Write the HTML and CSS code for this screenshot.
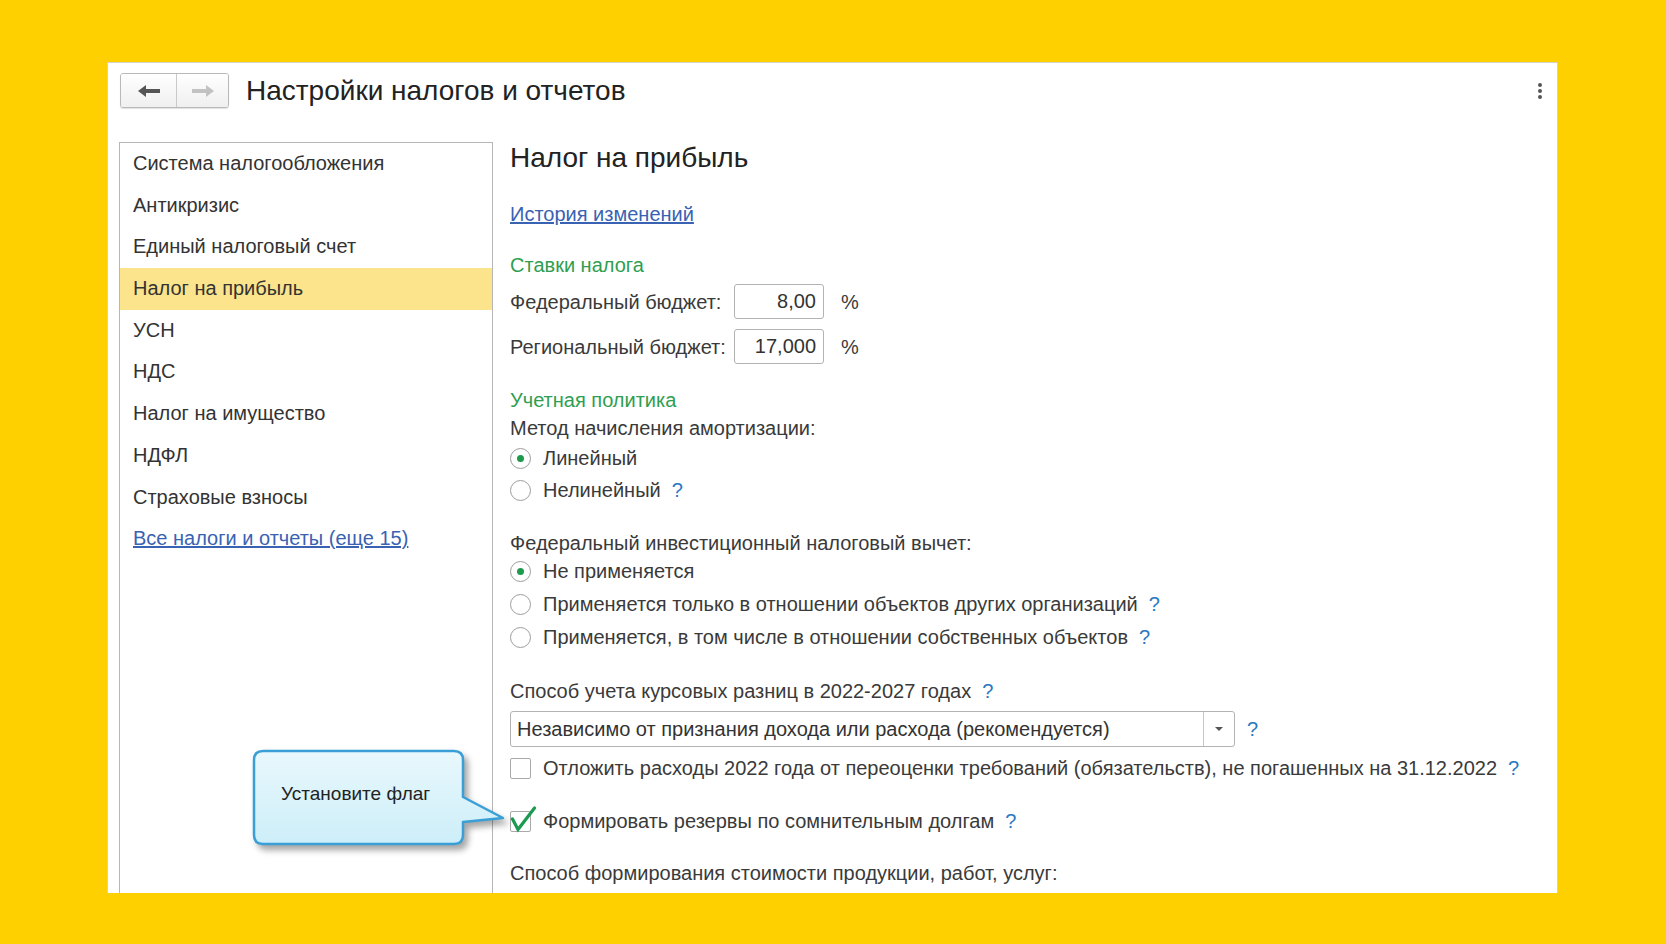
FILE: index.html
```html
<!DOCTYPE html>
<html lang="ru">
<head>
  <meta charset="UTF-8">
  <meta name="viewport" content="width=device-width, initial-scale=1.0">
  <title>Настройки налогов и отчетов</title>
  <link rel="stylesheet" href="styles.css">
</head>
<body>
  <div class="screen">
    <div class="window">
      <div class="header">
        <div class="nav">
          <button class="nav-btn back" title="Назад">
            <svg width="22" height="12" viewBox="0 0 22 12"><path d="M0 6 L8 0 L8 4 L22 4 L22 8 L8 8 L8 12 Z"/></svg>
          </button>
          <button class="nav-btn fwd" title="Вперед">
            <svg width="22" height="12" viewBox="0 0 22 12"><path d="M22 6 L14 0 L14 4 L0 4 L0 8 L14 8 L14 12 Z"/></svg>
          </button>
        </div>
        <h1 class="title">Настройки налогов и отчетов</h1>
        <div class="kebab"><span></span><span></span><span></span></div>
      </div>

      <div class="main">
        <ul class="sidebar">
          <li>Система налогообложения</li>
          <li>Антикризис</li>
          <li>Единый налоговый счет</li>
          <li class="active">Налог на прибыль</li>
          <li>УСН</li>
          <li>НДС</li>
          <li>Налог на имущество</li>
          <li>НДФЛ</li>
          <li>Страховые взносы</li>
          <li><a href="#">Все налоги и отчеты (еще 15)</a></li>
        </ul>

        <div class="content">
          <h2 class="heading">Налог на прибыль</h2>
          <a class="history" href="#">История изменений</a>

          <div class="group-title rates">Ставки налога</div>
          <div class="rate-row first">
            <span class="rate-label">Федеральный бюджет:</span>
            <span class="num-field">8,00</span>
            <span class="pct">%</span>
          </div>
          <div class="rate-row">
            <span class="rate-label">Региональный бюджет:</span>
            <span class="num-field">17,000</span>
            <span class="pct">%</span>
          </div>

          <div class="group-title policy">Учетная политика</div>
          <div class="label">Метод начисления амортизации:</div>
          <div class="radio-row"><span class="radio on"></span>Линейный</div>
          <div class="radio-row"><span class="radio"></span>Нелинейный<span class="help">?</span></div>

          <div class="label invest">Федеральный инвестиционный налоговый вычет:</div>
          <div class="radio-row tall"><span class="radio on"></span>Не применяется</div>
          <div class="radio-row tall"><span class="radio"></span>Применяется только в отношении объектов других организаций<span class="help">?</span></div>
          <div class="radio-row tall"><span class="radio"></span>Применяется, в том числе в отношении собственных объектов<span class="help">?</span></div>

          <div class="label rates-diff">Способ учета курсовых разниц в 2022-2027 годах<span class="help">?</span></div>
          <div class="combo-row">
            <div class="combo">
              <span class="combo-text">Независимо от признания дохода или расхода (рекомендуется)</span>
              <span class="combo-btn"><span class="caret"></span></span>
            </div>
            <span class="help">?</span>
          </div>
          <div class="check-row postpone"><span class="checkbox"></span>Отложить расходы 2022 года от переоценки требований (обязательств), не погашенных на 31.12.2022<span class="help">?</span></div>
          <div class="check-row reserves">
            <span class="checkbox">
              <svg class="tick" width="27" height="28" viewBox="0 0 27 28"><polyline points="2.5,13 8,23.5 24.5,2"/></svg>
            </span>Формировать резервы по сомнительным долгам<span class="help">?</span>
          </div>
          <div class="label cost">Способ формирования стоимости продукции, работ, услуг:</div>
        </div>
      </div>

      <svg class="callout-shape" width="262" height="106" viewBox="0 0 262 106">
        <defs>
          <linearGradient id="bubbleFill" x1="0" y1="0" x2="0" y2="1">
            <stop offset="0" stop-color="#e9f8fd"/>
            <stop offset="1" stop-color="#cdeef9"/>
          </linearGradient>
        </defs>
        <path d="M11 2 H202 Q211 2 211 11 V48 L251 69 L211 73 V86 Q211 95 202 95 H11 Q2 95 2 86 V11 Q2 2 11 2 Z"
              fill="url(#bubbleFill)" stroke="#3a9fd6" stroke-width="2.5" stroke-linejoin="round"/>
      </svg>
      <div class="callout-text">Установите флаг</div>
    </div>
  </div>
</body>
</html>
```

FILE: styles.css
```css
html, body {
  margin: 0;
  padding: 0;
}
body {
  font-family: "Liberation Sans", Arial, sans-serif;
  color: #3a3a3a;
}
.screen {
  width: 1666px;
  height: 944px;
  box-sizing: border-box;
  padding: 62px 0 0 107px;
  background-color: #ffd000;
  overflow: hidden;
}
.window {
  position: relative;
  width: 1451px;
  height: 831px;
  box-sizing: border-box;
  padding: 0 11px;
  background-color: #fff;
  border: 1px solid #d4d2c4;
  border-bottom: none;
  overflow: hidden;
}

/* шапка */
.header {
  display: flex;
  align-items: center;
  height: 35px;
  margin-top: 10px;
  margin-bottom: 34px;
}
.nav {
  display: flex;
  height: 35px;
  margin-left: 1px;
  box-sizing: border-box;
  border: 1px solid #b9b9b9;
  border-radius: 3px;
  overflow: hidden;
  box-shadow: 0 1px 1px rgba(0, 0, 0, 0.12);
}
.nav-btn {
  display: flex;
  align-items: center;
  justify-content: center;
  height: 100%;
  padding: 0;
  border: none;
  background: linear-gradient(#ffffff, #efefef);
}
.nav-btn.back {
  width: 55px;
}
.nav-btn.back svg {
  fill: #555;
}
.nav-btn.fwd {
  width: 52px;
  border-left: 1px solid #c9c9c9;
}
.nav-btn.fwd svg {
  fill: #c2c2c2;
}
.title {
  margin: 0 0 0 17px;
  font-size: 28px;
  font-weight: normal;
  line-height: 32px;
  color: #222;
}
.kebab {
  display: flex;
  flex-direction: column;
  gap: 2px;
  margin-left: auto;
  margin-right: 4px;
}
.kebab span {
  width: 4px;
  height: 4px;
  border-radius: 50%;
  background-color: #555;
}

/* левая панель */
.main {
  display: flex;
  height: 760px;
}
.sidebar {
  width: 374px;
  height: 800px;
  flex-shrink: 0;
  box-sizing: border-box;
  margin: 0;
  padding: 0;
  list-style: none;
  border: 1px solid #b6b6b6;
  border-bottom: none;
}
.sidebar li {
  height: 41.7px;
  line-height: 41.7px;
  padding-left: 13px;
  font-size: 20px;
  color: #333;
}
.sidebar li.active {
  background-color: #fce48c;
}
.sidebar a {
  color: #3a62b2;
}

/* форма */
.content {
  flex: 1;
  padding-left: 17px;
  font-size: 20px;
}
.heading {
  margin: 0;
  font-size: 28px;
  font-weight: normal;
  line-height: 32px;
  color: #222;
}
.history {
  display: block;
  width: max-content;
  margin-top: 24px;
  line-height: 32px;
  color: #3a62b2;
}
.group-title {
  color: #2f9e50;
}
.group-title.rates {
  margin-top: 19px;
  line-height: 32px;
}
.group-title.policy {
  margin-top: 22px;
  line-height: 28px;
}
.rate-row {
  display: flex;
  align-items: center;
  height: 35px;
  margin-top: 10px;
  line-height: 32px;
}
.rate-row.first {
  margin-top: 3px;
}
.rate-label {
  width: 224px;
}
.num-field {
  width: 90px;
  height: 35px;
  box-sizing: border-box;
  padding-right: 7px;
  border: 1px solid #b3b3b3;
  border-radius: 3px;
  text-align: right;
  line-height: 33px;
  color: #333;
}
.pct {
  margin-left: 17px;
}
.label {
  line-height: 28px;
}
.label.invest {
  margin-top: 26px;
  line-height: 23px;
}
.label.rates-diff {
  margin-top: 23px;
}
.label.cost {
  margin-top: 22px;
}
.radio-row {
  display: flex;
  align-items: center;
  height: 32px;
  line-height: 32px;
}
.radio-row.tall {
  height: 33px;
  line-height: 33px;
}
.radio {
  display: flex;
  align-items: center;
  justify-content: center;
  width: 21px;
  height: 21px;
  box-sizing: border-box;
  margin-right: 12px;
  border: 1px solid #9d9d9d;
  border-radius: 50%;
  background-color: #fff;
}
.radio.on::after {
  content: "";
  width: 7px;
  height: 7px;
  border-radius: 50%;
  background-color: #1e9a4c;
}
.help {
  margin-left: 11px;
  color: #2a78c2;
}
.combo-row {
  display: flex;
  align-items: center;
  height: 36px;
  margin-top: 6px;
}
.combo {
  display: flex;
  width: 725px;
  height: 36px;
  box-sizing: border-box;
  border: 1px solid #b3b3b3;
  border-radius: 3px;
}
.combo-text {
  flex: 1;
  padding-left: 6px;
  line-height: 34px;
  color: #333;
}
.combo-btn {
  display: flex;
  align-items: center;
  justify-content: center;
  width: 30px;
  border-left: 1px solid #c6c6c6;
}
.caret {
  width: 0;
  height: 0;
  border-left: 4px solid transparent;
  border-right: 4px solid transparent;
  border-top: 4px solid #555;
}
.combo-row .help {
  margin-left: 12px;
}
.check-row {
  display: flex;
  align-items: center;
  height: 32px;
  line-height: 32px;
}
.check-row.postpone {
  margin-top: 5px;
}
.check-row.reserves {
  margin-top: 21px;
}
.checkbox {
  position: relative;
  width: 21px;
  height: 21px;
  box-sizing: border-box;
  margin-right: 12px;
  border: 1px solid #a9a9a9;
  border-radius: 2px;
  background-color: #fff;
}
.tick {
  position: absolute;
  left: -1px;
  top: -6px;
  fill: none;
  stroke: #1c9a50;
  stroke-width: 3.2;
  stroke-linecap: round;
  stroke-linejoin: miter;
}

/* подсказка */
.callout-shape {
  position: absolute;
  left: 144px;
  top: 686px;
  filter: drop-shadow(4px 5px 3px rgba(0, 0, 0, 0.35));
}
.callout-text {
  position: absolute;
  left: 173px;
  top: 720px;
  font-size: 19px;
  line-height: 22px;
  color: #222;
}
```
